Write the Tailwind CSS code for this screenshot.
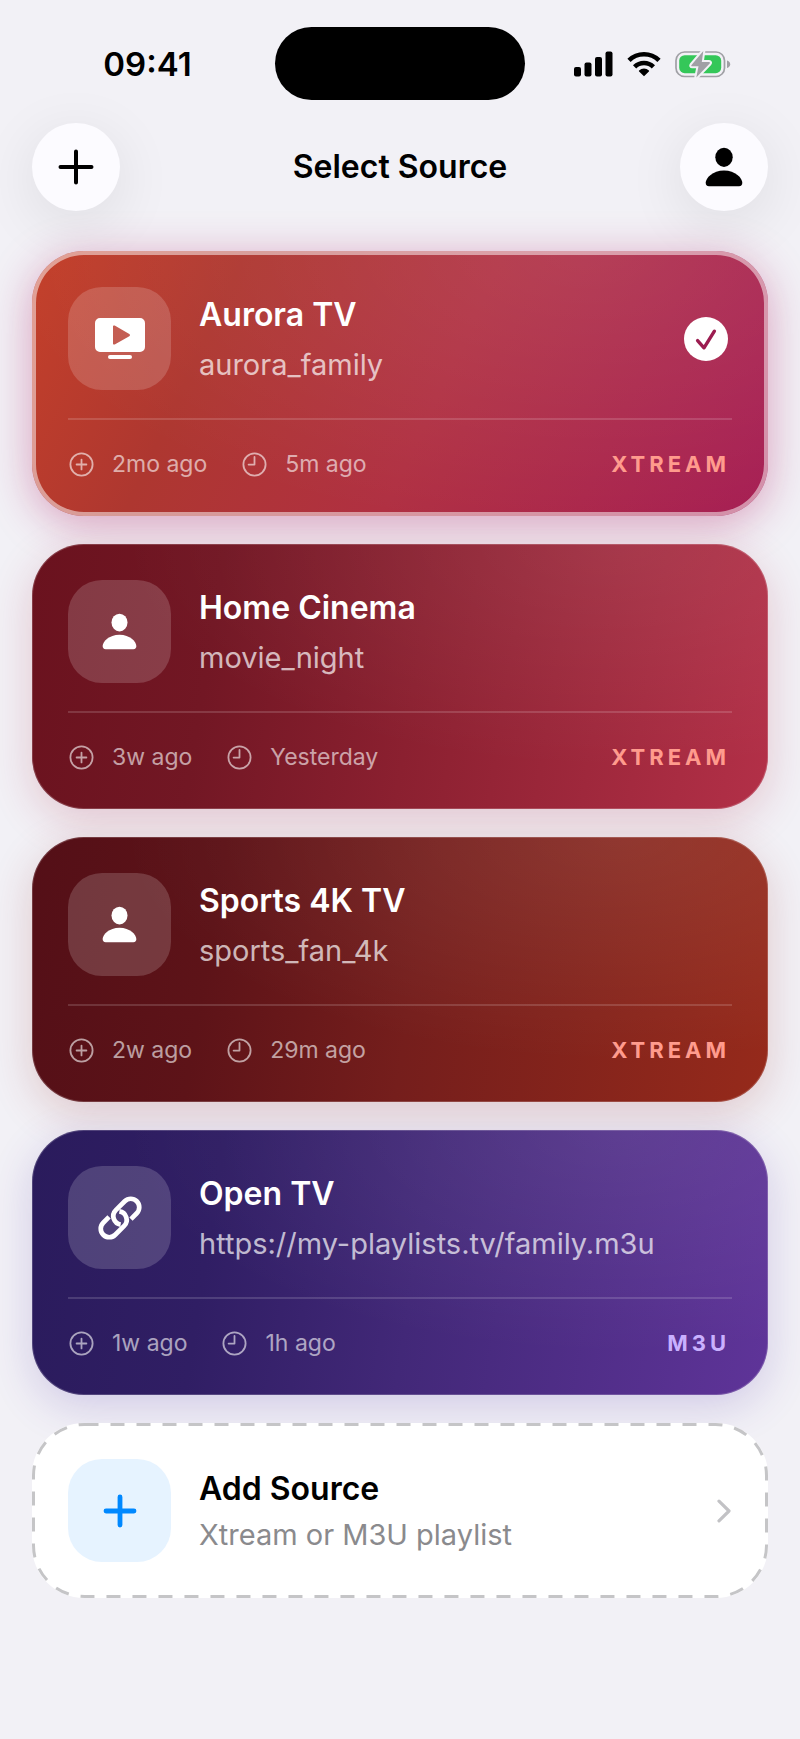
<!DOCTYPE html>
<html lang="en">
<head>
    <meta charset="UTF-8">
    <meta name="viewport" content="width=device-width, initial-scale=1.0">
    <title>Select Source</title>
    <script src="https://cdn.jsdelivr.net/npm/@tailwindcss/browser@4"></script>
</head>
<body class="bg-[#f2f1f6] font-['Inter',sans-serif] text-black min-h-screen">

    <!-- Shared icons -->
    <svg class="hidden">
        <symbol id="icon-person" viewBox="0 0 38 40">
            <ellipse cx="19" cy="10.3" rx="8.7" ry="9.6"/>
            <path d="M4 39.2C1.7 39.2.7 38 .7 35.8.7 31 7.6 23.4 19 23.4S37.3 31 37.3 35.8c0 2.2-1 3.4-3.3 3.4z"/>
        </symbol>
        <symbol id="icon-added" viewBox="0 0 27 27">
            <g fill="none" stroke="currentColor" stroke-width="1.8" stroke-linecap="round">
                <circle cx="13.5" cy="13.5" r="11.1"/>
                <path d="M13.5 8.6v9.8M8.6 13.5h9.8"/>
            </g>
        </symbol>
        <symbol id="icon-clock" viewBox="0 0 27 27">
            <g fill="none" stroke="currentColor" stroke-width="1.8" stroke-linecap="round" stroke-linejoin="round">
                <circle cx="13.5" cy="13.5" r="11.1"/>
                <path d="M13.5 6v7.6H7.6"/>
            </g>
        </symbol>
    </svg>

    <!-- Status bar -->
    <div class="grid grid-cols-[1fr_250px_1fr] items-center pt-[27px]">
        <div class="pl-5 text-center text-[33px] leading-[40px] font-semibold">09:41</div>
        <div class="h-[73px] rounded-full bg-black"></div>
        <div class="flex items-center justify-center gap-[14px] pr-5">
            <svg class="w-[39px] h-[26px]" viewBox="0 0 39 26">
                <rect x="0" y="16" width="7" height="9.5" rx="2"/>
                <rect x="10.5" y="11.5" width="7" height="14" rx="2"/>
                <rect x="21" y="6" width="7" height="19.5" rx="2"/>
                <rect x="31.5" y="0.5" width="7" height="25" rx="2"/>
            </svg>
            <svg class="w-[34px] h-[26px]" viewBox="0 0 34 26">
                <g fill="none" stroke="#000" stroke-width="4.6">
                    <path d="M2 9.4a21.5 21.5 0 0 1 30 0"/>
                    <path d="M7.6 15.8a13.4 13.4 0 0 1 18.8 0"/>
                </g>
                <path d="M17 25.3l-4.900-4.800c-.4-.4-.4-.8 0-1.100a7.600 7.600 0 0 1 9.800 0c.4.3.4.7 0 1.100z"/>
            </svg>
            <svg class="w-[56px] h-[28px]" viewBox="0 0 56 28">
                <rect x="1" y="2" width="48.5" height="24.5" rx="8.5" fill="none" stroke="#a0a0a5" stroke-width="1.7"/>
                <rect x="4.2" y="5.2" width="42" height="18" rx="5.5" fill="#34c759"/>
                <path d="M52 10.5c2 .6 3.2 2 3.2 3.8S54 17.5 52 18z" fill="#a0a0a5"/>
                <path d="M28.3 1L16.5 14.9c-.5.7-.2 1.4.6 1.4h6.4L21.3 27.5 34.7 13.5c.6-.7.3-1.5-.6-1.5h-7.3z" fill="#a0a0a5" stroke="#f2f1f6" stroke-width="4" stroke-linejoin="round" paint-order="stroke"/>
            </svg>
        </div>
    </div>

    <!-- Navigation -->
    <header class="mt-[23px] px-8 flex items-center justify-between">
        <button aria-label="Add" class="size-[88px] rounded-full bg-[#fcfbff] flex items-center justify-center shadow-[0_12px_60px_rgba(0,0,0,0.09)]">
            <svg class="size-9" viewBox="0 0 36 36" fill="none" stroke="#000" stroke-width="4" stroke-linecap="round">
                <path d="M18 2.5v31M2.5 18h31"/>
            </svg>
        </button>
        <h1 class="text-[32px] leading-[40px] font-semibold">Select Source</h1>
        <button aria-label="Profile" class="size-[88px] rounded-full bg-[#fcfbff] flex items-center justify-center shadow-[0_12px_60px_rgba(0,0,0,0.09)]">
            <svg class="w-[38px] h-[40px]"><use href="#icon-person"/></svg>
        </button>
    </header>

    <main class="mt-10 px-8 pb-10 flex flex-col gap-7">

        <!-- Aurora TV (selected) -->
        <button class="relative w-full p-9 text-left text-white rounded-[52px] bg-[radial-gradient(ellipse_at_75%_0%,rgba(255,255,255,0.09),transparent_75%),linear-gradient(115deg,#c4402a_0%,#ae3730_25%,#b03042_55%,#a61e54_100%)] bg-[#b03042] shadow-[inset_0_0_0_4px_rgba(255,255,255,0.5),0_8px_44px_rgba(176,30,100,0.38)]">
            <span class="flex items-center gap-7">
                <span class="size-[103px] shrink-0 rounded-[34px] bg-white/17 flex items-center justify-center">
                    <svg class="w-[50px] h-[41px]" viewBox="0 0 50 41" fill="#fff">
                        <path fill-rule="evenodd" d="M5 0h40a5 5 0 0 1 5 5v24a5 5 0 0 1-5 5H5a5 5 0 0 1-5-5V5a5 5 0 0 1 5-5zM18 8.5v17c0 1 .8 1.4 1.7.9l14.6-8.2c.9-.5.9-1.6 0-2.1L19.7 7.6c-.9-.5-1.7-.1-1.7.9z"/>
                        <rect x="13" y="37" width="24" height="4" rx="2"/>
                    </svg>
                </span>
                <span class="flex flex-col gap-3 min-w-0 flex-1">
                    <span class="text-[32px] leading-[40px] font-semibold">Aurora TV</span>
                    <span class="text-[29px] leading-[36px] text-white/70">aurora_family</span>
                </span>
                <svg class="size-11 mr-1" viewBox="0 0 44 44">
                    <circle cx="22" cy="22" r="22" fill="#fff"/>
                    <path d="M13.6 23.6l6.4 7.2 10.4-16.6" fill="none" stroke="#9c1c50" stroke-width="3.4" stroke-linecap="round" stroke-linejoin="round"/>
                </svg>
            </span>
            <span class="block h-[2px] my-7 bg-white/15"></span>
            <span class="flex items-center justify-between">
                <span class="flex gap-[34px] text-[23px] leading-[32px] text-white/60">
                    <span class="flex items-center gap-[17px]"><svg class="size-[27px]"><use href="#icon-added"/></svg>2mo ago</span>
                    <span class="flex items-center gap-[17px]"><svg class="size-[27px]"><use href="#icon-clock"/></svg>5m ago</span>
                </span>
                <span class="mr-0.5 text-[22px] leading-[32px] font-bold tracking-[4px] text-[#ff9b8d]">XTREAM</span>
            </span>
        </button>

        <!-- Home Cinema -->
        <button class="relative w-full p-9 text-left text-white rounded-[52px] bg-[radial-gradient(ellipse_at_80%_0%,rgba(255,255,255,0.08),transparent_60%),linear-gradient(99deg,#6a121e_0%,#721724_25%,#8b2030_52%,#b33048_100%)] bg-[#8b2030] shadow-[inset_0_0_0_1px_rgba(255,255,255,0.18),0_12px_44px_rgba(170,30,60,0.2)]">
            <span class="flex items-center gap-7">
                <span class="size-[103px] shrink-0 rounded-[34px] bg-white/17 flex items-center justify-center">
                    <svg class="w-[35px] h-[37px]" fill="#fff"><use href="#icon-person"/></svg>
                </span>
                <span class="flex flex-col gap-3 min-w-0 flex-1">
                    <span class="text-[32px] leading-[40px] font-semibold">Home Cinema</span>
                    <span class="text-[29px] leading-[36px] text-white/70">movie_night</span>
                </span>
            </span>
            <span class="block h-[2px] my-7 bg-white/15"></span>
            <span class="flex items-center justify-between">
                <span class="flex gap-[34px] text-[23px] leading-[32px] text-white/60">
                    <span class="flex items-center gap-[17px]"><svg class="size-[27px]"><use href="#icon-added"/></svg>3w ago</span>
                    <span class="flex items-center gap-[17px]"><svg class="size-[27px]"><use href="#icon-clock"/></svg>Yesterday</span>
                </span>
                <span class="mr-0.5 text-[22px] leading-[32px] font-bold tracking-[4px] text-[#ff9b8d]">XTREAM</span>
            </span>
        </button>

        <!-- Sports 4K TV -->
        <button class="relative w-full p-9 text-left text-white rounded-[52px] bg-[radial-gradient(ellipse_at_80%_0%,rgba(255,255,255,0.09),transparent_60%),linear-gradient(99deg,#540f17_0%,#5d1318_25%,#751e1c_52%,#962a1b_100%)] bg-[#751e1c] shadow-[inset_0_0_0_1px_rgba(255,255,255,0.18),0_12px_44px_rgba(150,40,40,0.2)]">
            <span class="flex items-center gap-7">
                <span class="size-[103px] shrink-0 rounded-[34px] bg-white/17 flex items-center justify-center">
                    <svg class="w-[35px] h-[37px]" fill="#fff"><use href="#icon-person"/></svg>
                </span>
                <span class="flex flex-col gap-3 min-w-0 flex-1">
                    <span class="text-[32px] leading-[40px] font-semibold">Sports 4K TV</span>
                    <span class="text-[29px] leading-[36px] text-white/70">sports_fan_4k</span>
                </span>
            </span>
            <span class="block h-[2px] my-7 bg-white/15"></span>
            <span class="flex items-center justify-between">
                <span class="flex gap-[34px] text-[23px] leading-[32px] text-white/60">
                    <span class="flex items-center gap-[17px]"><svg class="size-[27px]"><use href="#icon-added"/></svg>2w ago</span>
                    <span class="flex items-center gap-[17px]"><svg class="size-[27px]"><use href="#icon-clock"/></svg>29m ago</span>
                </span>
                <span class="mr-0.5 text-[22px] leading-[32px] font-bold tracking-[4px] text-[#ff9b8d]">XTREAM</span>
            </span>
        </button>

        <!-- Open TV -->
        <button class="relative w-full p-9 text-left text-white rounded-[52px] bg-[radial-gradient(ellipse_at_80%_0%,rgba(255,255,255,0.08),transparent_60%),linear-gradient(99deg,#2a1b5c_0%,#301e64_25%,#422878_52%,#5f3499_100%)] bg-[#422878] shadow-[inset_0_0_0_1px_rgba(255,255,255,0.18),0_12px_44px_rgba(80,50,170,0.2)]">
            <span class="flex items-center gap-7">
                <span class="size-[103px] shrink-0 rounded-[34px] bg-white/17 flex items-center justify-center">
                    <svg class="size-11" viewBox="-22 -22 44 44" fill="none" stroke="#fff" stroke-width="4.7">
                        <g transform="rotate(-45)">
                            <path d="M7 8.5H15.2A8.5 8.5 0 0 0 15.200-8.500H2.600A8.500 8.500 0 0 0-4.200 5.100"/>
                            <path d="M-7-8.500H-15.200A8.500 8.500 0 0 0-15.200 8.500H-2.600A8.500 8.500 0 0 0 4.200-5.100"/>
                        </g>
                    </svg>
                </span>
                <span class="flex flex-col gap-3 min-w-0 flex-1">
                    <span class="text-[32px] leading-[40px] font-semibold">Open TV</span>
                    <span class="text-[29px] leading-[36px] text-white/70">https://my-playlists.tv/family.m3u</span>
                </span>
            </span>
            <span class="block h-[2px] my-7 bg-white/15"></span>
            <span class="flex items-center justify-between">
                <span class="flex gap-[34px] text-[23px] leading-[32px] text-white/60">
                    <span class="flex items-center gap-[17px]"><svg class="size-[27px]"><use href="#icon-added"/></svg>1w ago</span>
                    <span class="flex items-center gap-[17px]"><svg class="size-[27px]"><use href="#icon-clock"/></svg>1h ago</span>
                </span>
                <span class="mr-0.5 text-[22px] leading-[32px] font-bold tracking-[4px] text-[#c9b0ff]">M3U</span>
            </span>
        </button>

        <!-- Add source -->
        <button class="relative w-full p-9 text-left rounded-[52px] bg-white flex items-center gap-7">
            <svg class="absolute inset-0 size-full" fill="none" stroke="#c5c5c7" stroke-width="3" stroke-dasharray="14 12">
                <rect class="w-[calc(100%-3px)] h-[calc(100%-3px)]" x="1.5" y="1.5" rx="51"/>
            </svg>
            <span class="size-[103px] shrink-0 rounded-[34px] bg-[#e6f3ff] flex items-center justify-center">
                <svg class="size-[34px]" viewBox="0 0 34 34" fill="none" stroke="#0088ff" stroke-width="4.8" stroke-linecap="round">
                    <path d="M17 3v28M3 17h28"/>
                </svg>
            </span>
            <span class="flex flex-col gap-2 min-w-0 flex-1">
                <span class="text-[32px] leading-[40px] font-semibold">Add Source</span>
                <span class="text-[29px] leading-[36px] text-[#8a8a8d]">Xtream or M3U playlist</span>
            </span>
            <svg class="w-[16px] h-[24px]" viewBox="0 0 16 24" fill="none" stroke="#c2c2c5" stroke-width="3.2" stroke-linecap="round" stroke-linejoin="round">
                <path d="M3 2.2L13 12 3 21.8"/>
            </svg>
        </button>
    </main>
</body>
</html>
